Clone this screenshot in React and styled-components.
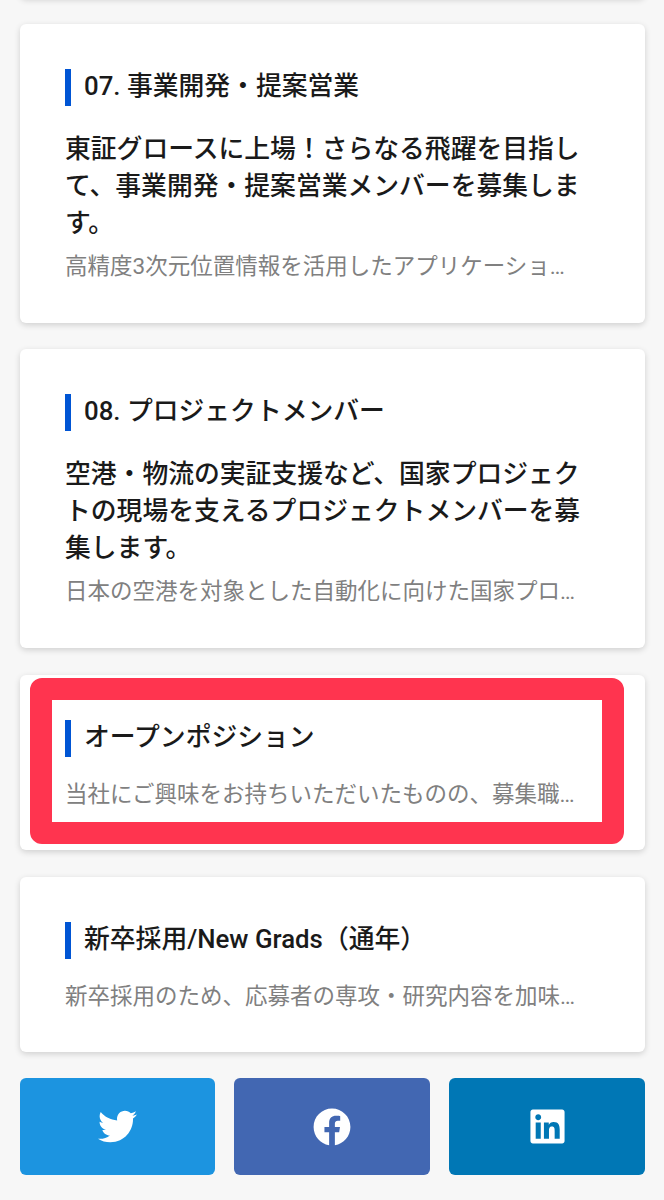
import React from "react";
import styled, { createGlobalStyle } from "styled-components";
import { FaTwitter, FaFacebook, FaLinkedin } from "react-icons/fa";

const GlobalStyle = createGlobalStyle`
  html, body {
    margin: 0;
    padding: 0;
    background: #f7f7f7;
    font-family: Roboto, "Noto Sans CJK JP", sans-serif;
    overflow: hidden;
  }
`;

const jobs = [
  {
    heading: "07. 事業開発・提案営業",
    title: "東証グロースに上場！さらなる飛躍を目指して、事業開発・提案営業メンバーを募集します。",
    desc: "高精度3次元位置情報を活用したアプリケーショ…",
  },
  {
    heading: "08. プロジェクトメンバー",
    title: "空港・物流の実証支援など、国家プロジェクトの現場を支えるプロジェクトメンバーを募集します。",
    desc: "日本の空港を対象とした自動化に向けた国家プロ…",
  },
  {
    heading: "オープンポジション",
    desc: "当社にご興味をお持ちいただいたものの、募集職…",
    highlighted: true,
  },
  {
    heading: "新卒採用/New Grads（通年）",
    desc: "新卒採用のため、応募者の専攻・研究内容を加味…",
  },
];

export default function App() {
  return (
    <Page>
      <GlobalStyle />
      <PreviousCard />
      {jobs.map((job) => (
        <Card key={job.heading} $short={!job.title}>
          <Heading>{job.heading}</Heading>
          {job.title && <Title>{job.title}</Title>}
          <Desc>{job.desc}</Desc>
          {job.highlighted && <Highlight />}
        </Card>
      ))}
      <Share>
        <ShareButton $color="#1c94e0" aria-label="Twitter">
          <FaTwitter size={39} />
        </ShareButton>
        <ShareButton $color="#4267b2" aria-label="Facebook">
          <FaFacebook size={38} />
        </ShareButton>
        <ShareButton $color="#0077b5" aria-label="LinkedIn">
          <FaLinkedin size={39} />
        </ShareButton>
      </Share>
    </Page>
  );
}

const Page = styled.div`
  display: flex;
  flex-direction: column;
  gap: 26.4px;
  width: 625px;
  height: 1200px;
  padding: 0 19px 0 20px;
  overflow: hidden;
`;

const Card = styled.section`
  flex: none;
  position: relative;
  box-sizing: border-box;
  background: #fff;
  border-radius: 6px;
  box-shadow: 0 2px 6px rgba(0, 0, 0, 0.16);
  padding: 45px 45px 0;
  height: ${(p) => (p.$short ? "175.4px" : "299px")};
`;

const PreviousCard = styled(Card)`
  height: 20px;
  padding: 0;
  margin-top: -22.4px;
`;

const Heading = styled.h2`
  margin: 0;
  height: 37px;
  padding-left: 13px;
  border-left: 6px solid #0055d4;
  font-size: 25.8px;
  font-weight: 500;
  line-height: 35px;
  color: #1a1a1a;
`;

const Title = styled.h3`
  margin: 25px 0 0;
  font-size: 25.8px;
  font-weight: 500;
  line-height: 37px;
  color: #1a1a1a;
`;

const Desc = styled.p`
  margin: 7px 0 0;
  font-size: 22.5px;
  line-height: 34px;
  color: #808080;
  white-space: nowrap;
  ${Heading} + & {
    margin-top: 20px;
  }
`;

const Highlight = styled.div`
  position: absolute;
  top: 3px;
  left: 10px;
  right: 21px;
  bottom: 6px;
  border: 22px solid #ff344f;
  border-radius: 12px;
`;

const Share = styled.div`
  display: grid;
  grid-template-columns: 195px 196px 196px;
  gap: 19px;
`;

const ShareButton = styled.a`
  display: flex;
  align-items: center;
  justify-content: center;
  height: 97px;
  border-radius: 6px;
  background: ${(p) => p.$color};
  color: #fff;
`;
